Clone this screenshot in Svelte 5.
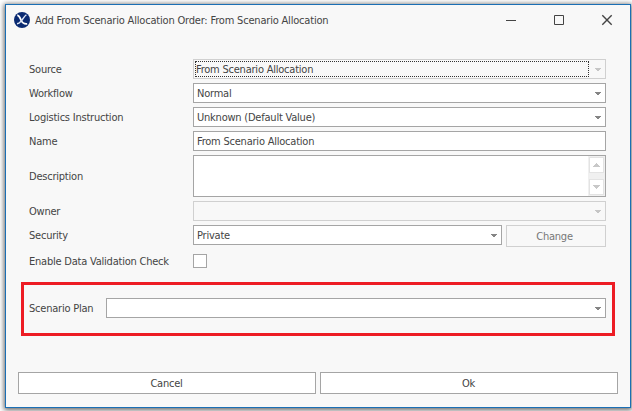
<script>
  const arrow = 'M0 0h6v1h-1v1h-1v1h-2v-1h-1v-1h-1z';
</script>

{#snippet caret()}
  <svg class="caret" width="6" height="3" viewBox="0 0 6 3"><path d={arrow} /></svg>
{/snippet}

<div class="desktop">
  <div class="window">
    <header>
      <svg class="logo" width="16" height="16" viewBox="0 0 16 16">
        <circle cx="8" cy="8" r="8" fill="#0a2a72" />
        <path d="M3.2 3.4C5.2 3.2 5.8 5.4 7 8C8 10.4 10 12.2 13.2 11.8" fill="none" stroke="#fff" stroke-width="1.8" />
        <path d="M12.4 2.8C10.4 4.2 8.9 7 7 9.2C5.8 10.6 4.6 11.6 3 11.7" fill="none" stroke="#dde5f5" stroke-width="1.4" />
      </svg>
      <span class="title">Add From Scenario Allocation Order: From Scenario Allocation</span>
      <svg class="controls" width="107" height="12" viewBox="0 0 107 12" fill="none" stroke="#444">
        <path d="M0 6.5h10M48.5 1.5h9v9h-9z" />
        <path d="M96.3 1.3l9.4 9.4M105.7 1.3l-9.4 9.4" stroke-width="1.4" />
      </svg>
    </header>

    <main>
      <div class="row"><label for="source">Source</label>
        <div id="source" class="field off focus"><span class="dotted">From Scenario Allocation</span>{@render caret()}</div></div>
      <div class="row"><label for="workflow">Workflow</label>
        <div id="workflow" class="field"><span>Normal</span>{@render caret()}</div></div>
      <div class="row"><label for="logistics">Logistics Instruction</label>
        <div id="logistics" class="field"><span>Unknown (Default Value)</span>{@render caret()}</div></div>
      <div class="row"><label for="name">Name</label>
        <div id="name" class="field"><span>From Scenario Allocation</span></div></div>
      <div class="row tall"><label for="description">Description</label>
        <div id="description" class="field area">
          <div class="scroll">
            <i><svg width="7" height="4" viewBox="0 0 7 4"><path d="M3 0h1v1h1v1h1v1h1v1h-7v-1h1v-1h1v-1h1z" /></svg></i>
            <i><svg width="7" height="4" viewBox="0 0 7 4"><path d="M0 0h7v1h-1v1h-1v1h-1v1h-1v-1h-1v-1h-1v-1h-1z" /></svg></i>
          </div>
        </div></div>
      <div class="row"><label for="owner">Owner</label>
        <div id="owner" class="field off"><span></span>{@render caret()}</div></div>
      <div class="row security"><label for="security">Security</label>
        <div id="security" class="field"><span>Private</span>{@render caret()}</div>
        <button class="change" disabled>Change</button></div>
      <div class="row check"><label for="validate">Enable Data Validation Check</label>
        <div id="validate" class="box"></div></div>
    </main>

    <section class="plan">
      <label for="plan">Scenario Plan</label>
      <div id="plan" class="field"><span></span>{@render caret()}</div>
    </section>

    <footer>
      <button>Cancel</button>
      <button>Ok</button>
    </footer>
  </div>
</div>

<style>
  :global(body) { background: #fff; overflow: hidden; }
  .desktop, .desktop * { box-sizing: border-box; }
  .desktop {
    width: 632px; height: 411px; padding: 4px 1px 3px 5px; overflow: hidden;
    font: 11px/18px "DejaVu Sans Condensed", "DejaVu Sans", sans-serif; letter-spacing: -0.22px; color: #444;
    white-space: nowrap;
  }
  .window {
    width: 626px; height: 404px; border: 1px solid #1a6fb5; background: #f8f8f8;
    box-shadow: 0 1px 5px 1px rgba(0, 0, 0, 0.6);
    display: flex; flex-direction: column;
  }
  header { display: flex; align-items: center; height: 30px; padding: 0 17px 0 8px; }
  .title { margin-left: 5px; padding-top: 2px; flex: 1; letter-spacing: -0.19px; }
  main { padding: 24px 24px 0 23px; }
  .row { display: flex; height: 20px; margin-bottom: 4px; align-items: center; }
  .row label { width: 164px; flex: none; padding-top: 2px; }
  .tall { height: 42px; }
  .field {
    flex: 1; height: 20px; border: 1px solid #a5a5a5; background: #fff;
    display: flex; align-items: center; padding: 0 4px 0 3px;
  }
  .field span { flex: 1; padding-top: 2px; }
  .off { border-color: #d0d0d0; background: #f8f8f8; }
  .field.focus { padding-left: 1px; }
  .field .dotted { height: 16px; line-height: 14px; padding-top: 1px; border: 1px dotted #333; margin-right: 6px; }
  .caret { fill: #858585; }
  .off .caret { fill: #c6c6c6; }
  .area { height: 42px; padding: 0; justify-content: flex-end; }
  .scroll {
    width: 17px; height: 40px; background: #f0f0f0; padding: 1px;
    display: flex; flex-direction: column; justify-content: space-between;
  }
  .scroll i {
    width: 15px; height: 16px; border: 1px solid #e3e3e3; background: #fff;
    display: flex; align-items: center; justify-content: center;
  }
  .scroll svg { fill: #c8c8c8; }
  .row.security { height: 22px; align-items: flex-start; }
  .security label { line-height: 20px; padding-top: 1px; }
  button {
    font: inherit; letter-spacing: inherit; color: inherit; height: 22px; padding: 2px 1px 0 0;
    border: 1px solid #a5a5a5; border-radius: 0; background: #fff; flex: 1;
  }
  .change {
    flex: none; width: 100px; margin-left: 4px; padding-right: 3px;
    border-color: #d0d0d0; background: #f8f8f8; color: #777;
  }
  .check { height: 20px; margin: 0; }
  .box { width: 14px; height: 14px; border: 1px solid #a5a5a5; background: #fff; }
  .plan {
    margin: 11px 15px 0; height: 54px; border: 3px solid #ed1c24; flex: none;
    display: flex; padding: 13px 6px 0 5px;
  }
  .plan label { width: 77px; line-height: 20px; padding-top: 1px; }
  footer { display: flex; gap: 4px; padding: 0 12px; margin: 36px 0 0; }
</style>
